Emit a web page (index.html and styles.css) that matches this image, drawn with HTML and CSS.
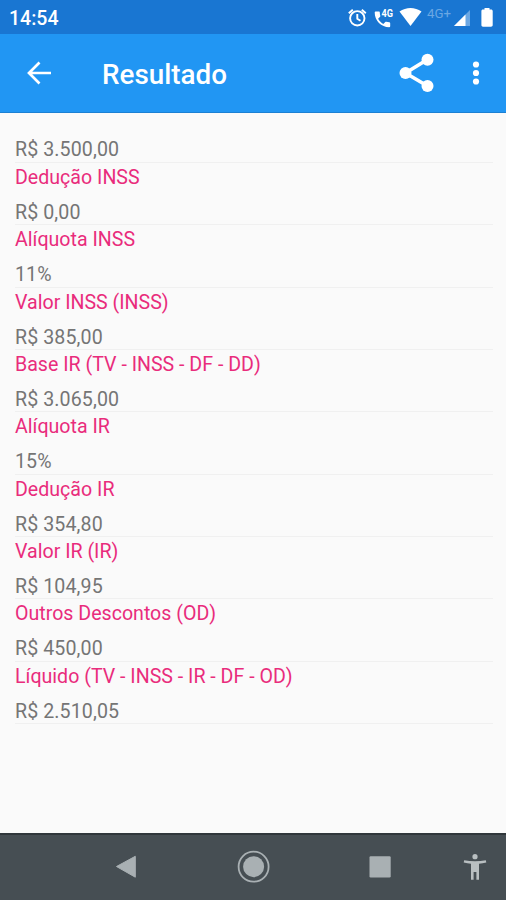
FILE: index.html
```html
<!doctype html>
<html lang="pt-BR">
<head>
  <meta charset="UTF-8">
  <title>Resultado</title>
  <link rel="stylesheet" href="styles.css">
</head>
<body>
  <div class="tela">
    <div class="status">
      <span class="hora">14:54</span>
      <svg class="status-icones" width="166" height="34" viewBox="340 0 166 34">
        <!-- alarme -->
        <g fill="none" stroke="#fff" stroke-width="1.9">
          <circle cx="357.3" cy="18.3" r="7.2"/>
          <path d="M357.3 14v4.800l3.200 2M348.800 13.200l4-3.500M365.800 13.200l-4-3.500"/>
        </g>
        <!-- chamada 4G -->
        <path fill="#fff" d="M375.600 11.500h3.200c.6 0 1 .4 1 1 0 1.200.2 2.300.5 3.300.1.4 0 .8-.2 1l-2 2c1.500 2.500 3 4 5.200 5.200l2-2c.3-.3.7-.4 1-.2 1 .3 2 .5 3 .5.6 0 .9.4.9.9v3.100c0 .5-.4.900-.9.900-8.100 0-14.600-6.500-14.600-14.700 0-.6.4-1 .9-1z"/>
        <text class="rede-chamada" x="381.500" y="17.300" textLength="11.500" lengthAdjust="spacingAndGlyphs">4G</text>
        <!-- wifi -->
        <path fill="#fff" d="M410.500 26l-11-14.500c6.500-4.700 15.500-4.700 22 0z"/>
        <text class="rede" x="427" y="18" textLength="24" lengthAdjust="spacingAndGlyphs">4G+</text>
        <!-- sinal -->
        <path fill="#6ba7e3" d="M454 26L470 10v16z"/>
        <path fill="#fff" d="M454 26L465.500 14.500V26z"/>
        <!-- bateria -->
        <path fill="#fff" d="M483 9.500h1.500V8h5v1.500h1.500c1 0 1.700.7 1.700 1.600v14c0 1-.7 1.600-1.700 1.600h-8c-1 0-1.600-.6-1.600-1.600v-14c0-.9.6-1.600 1.600-1.600z"/>
      </svg>
    </div>
    <div class="barra">
      <svg class="voltar" width="26" height="24" viewBox="0 0 26 24" fill="none" stroke="#fff" stroke-width="2.700">
        <path d="M25 12H3M13.500 1.500L3 12l10.500 10.500"/>
      </svg>
      <h1>Resultado</h1>
      <svg class="compartilhar" width="36" height="40" viewBox="0 0 36 40">
        <path d="M28.500 6.500L6.500 20l22 13" fill="none" stroke="#fff" stroke-width="3.600"/>
        <g fill="#fff">
          <circle cx="28.500" cy="6.700" r="6"/>
          <circle cx="6.500" cy="20" r="6"/>
          <circle cx="28.500" cy="33" r="6"/>
        </g>
      </svg>
      <svg class="menu" width="8" height="24" viewBox="0 0 8 24" fill="#fff">
        <circle cx="4" cy="3.500" r="3.100"/>
        <circle cx="4" cy="12" r="3.100"/>
        <circle cx="4" cy="20.500" r="3.100"/>
      </svg>
    </div>
    <dl class="lista">
      <div class="item primeiro"><dd>R$ 3.500,00</dd></div>
      <div class="item"><dt>Dedução INSS</dt><dd>R$ 0,00</dd></div>
      <div class="item"><dt>Alíquota INSS</dt><dd>11%</dd></div>
      <div class="item"><dt>Valor INSS (INSS)</dt><dd>R$ 385,00</dd></div>
      <div class="item"><dt>Base IR (TV - INSS - DF - DD)</dt><dd>R$ 3.065,00</dd></div>
      <div class="item"><dt>Alíquota IR</dt><dd>15%</dd></div>
      <div class="item"><dt>Dedução IR</dt><dd>R$ 354,80</dd></div>
      <div class="item"><dt>Valor IR (IR)</dt><dd>R$ 104,95</dd></div>
      <div class="item"><dt>Outros Descontos (OD)</dt><dd>R$ 450,00</dd></div>
      <div class="item"><dt>Líquido (TV - INSS - IR - DF - OD)</dt><dd>R$ 2.510,05</dd></div>
    </dl>
    <div class="navegacao">
      <svg width="506" height="65" viewBox="0 1 506 65">
        <path fill="#a9b0b3" stroke="#a9b0b3" stroke-linejoin="round" d="M116.500 32.500L135.300 22.300V43.200z"/>
        <circle cx="253.600" cy="32.700" r="15" fill="none" stroke="#a9b0b3" stroke-width="1.800"/>
        <circle cx="253.600" cy="32.700" r="10.500" fill="#a9b0b3"/>
        <rect x="369.500" y="22.300" width="21.200" height="21.200" rx="1.200" fill="#a9b0b3"/>
        <!-- acessibilidade -->
        <g fill="#b9bfc1">
          <circle cx="475" cy="22.700" r="2.600"/>
          <path d="M464.200 26.200c7 1.400 14.600 1.400 21.600 0l.5 2.300c-2.500.6-5 1-7.300 1.200v16h-2.600v-7.700h-2.800v7.700H471v-16c-2.300-.2-4.800-.6-7.300-1.200z"/>
        </g>
      </svg>
    </div>
  </div>
</body>
</html>
```
FILE: styles.css
```css
*{margin:0;
  padding:0;
  box-sizing:border-box;}
body{font-family:Roboto, "Liberation Sans", sans-serif;
     background:#fafafa;}
.tela{width:506px;
      height:900px;
      display:flex;
      flex-direction:column;
      overflow:hidden;}
.status{height:34px;
        display:flex;
        justify-content:space-between;
        background:#1976d2;
        color:#fff;}
.hora{padding-left:9px;
      font-size:19.5px;
      font-weight:500;
      line-height:37px;}
.rede-chamada{font-size:10px;
              font-weight:700;
              fill:#fff;}
.rede{font-size:12.5px;
      fill:#6ba7e3;}
.barra{height:79px;
       display:flex;
       align-items:center;
       padding:0 26px;
       background:#2196f3;
       border-bottom:1px solid #1c80d3;
       color:#fff;}
.barra h1{flex:1;
          margin-left:50px;
          font-size:27.8px;
          font-weight:500;
          line-height:34px;
          padding-top:3px;}
.compartilhar{margin-right:37px;}
.lista{flex:1;
       padding:24px 13px 0 15px;}
.item{height:62.35px;
      border-bottom:1px solid #f0f0f0;
      font-size:19.6px;}
.item dt{height:37px;
         line-height:29px;
         color:#e92c7c;}
.item dd{line-height:25px;
         letter-spacing:.1px;
         color:#757575;}
.primeiro{height:26px;}
.navegacao{height:67px;
           background:#464e53;
           border-top:2px solid #30373b;}
.navegacao svg{display:block;}
```
